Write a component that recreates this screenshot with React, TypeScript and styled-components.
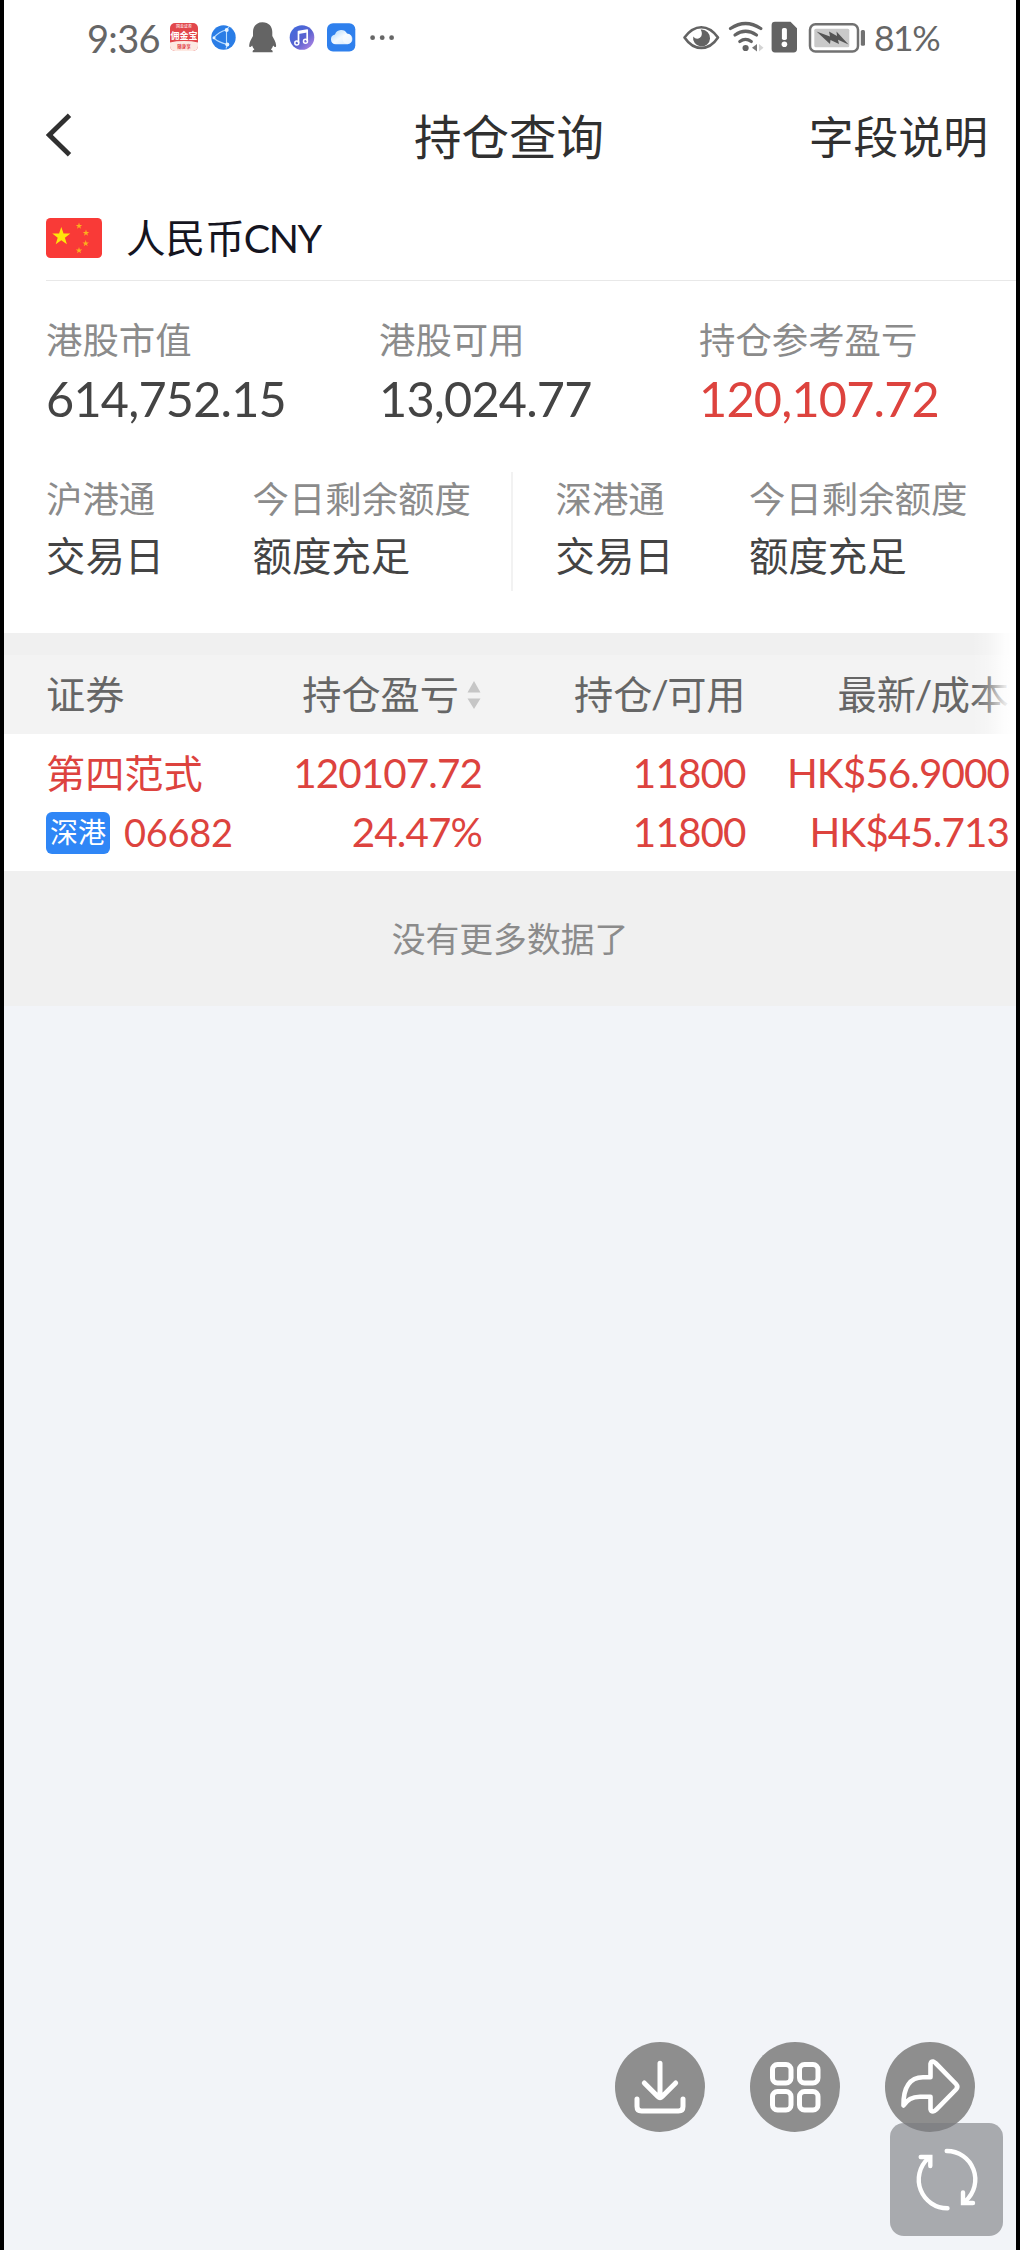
import React from "react";
import styled, { createGlobalStyle } from "styled-components";

const GlobalStyle = createGlobalStyle`
  *, *::before, *::after { box-sizing: border-box; }
  html, body { margin: 0; padding: 0; background: #000; }
  body { font-family: Lato, "Noto Sans CJK SC", sans-serif; }
`;

const RED = "#dd433e";

const Screen = styled.main`
  position: relative;
  width: 1020px;
  height: 2250px;
  overflow: hidden;
  border: solid #000;
  border-width: 0 4px;
  background: #f2f4f8;
  display: flex;
  flex-direction: column;
`;

const StatusBar = styled.header`
  height: 73px;
  flex: none;
  padding: 0 78px 0 83px;
  display: flex;
  align-items: center;
  justify-content: space-between;
  background: #fff;
  color: #666;
`;

const StatusGroup = styled.div<{ $gap: number }>`
  display: flex;
  align-items: center;
  gap: ${(p) => p.$gap}px;
`;

const StatusText = styled.span<{ $size: number; $width: number; $spacing?: number }>`
  width: ${(p) => p.$width}px;
  font-size: ${(p) => p.$size}px;
  line-height: 40px;
  padding-top: 3px;
  letter-spacing: ${(p) => p.$spacing ?? 0}px;
  white-space: nowrap;
`;

const AppBadge = styled.span`
  width: 28px;
  height: 28px;
  margin-right: 13px;
  border-radius: 5px;
  overflow: hidden;
  background: #e2474b;
  color: #fff;
  display: flex;
  flex-direction: column;
  align-items: center;
`;

const BadgeTop = styled.span`
  font-size: 4px;
  line-height: 7px;
`;

const BadgeName = styled.span`
  font-size: 9px;
  font-weight: 700;
  line-height: 11px;
  white-space: nowrap;
`;

const BadgeFoot = styled.span`
  width: 40px;
  flex: 1;
  background: #fde9e2;
  color: #e2474b;
  border-radius: 50% 50% 0 0 / 5px 5px 0 0;
  font-size: 4.5px;
  font-weight: 700;
  line-height: 12px;
  text-align: center;
`;

const NavBar = styled.nav`
  height: 127px;
  flex: none;
  padding: 0 28px 0 42px;
  display: grid;
  grid-template-columns: 368px auto 1fr;
  align-items: center;
  background: #fff;
  color: #303030;
`;

const BackButton = styled.button`
  width: 30px;
  height: 44px;
  margin-top: -3px;
  padding: 0;
  border: 0;
  background: none;
  display: flex;
`;

const NavTitle = styled.h1`
  margin: 0;
  font-size: 47.5px;
  font-weight: 400;
  line-height: 60px;
`;

const NavAction = styled.a`
  justify-self: end;
  font-size: 44.8px;
  line-height: 60px;
`;

const Currency = styled.section`
  height: 81px;
  flex: none;
  padding-left: 42px;
  background: #fff;
`;

const CurrencyInner = styled.div`
  height: 81px;
  display: flex;
  align-items: center;
  gap: 24px;
  border-bottom: 1px solid #e8e8e8;
  padding-bottom: 4px;
`;

const CurrencyName = styled.span`
  font-size: 39.6px;
  line-height: 50px;
  color: #15151f;
`;

const CurrencyCode = styled.span`
  margin-left: -1px;
  letter-spacing: -1.4px;
`;

const Assets = styled.section`
  flex: none;
  height: 189px;
  padding: 34px 0 0 42px;
  display: grid;
  grid-template-columns: 333px 320px 1fr;
  background: #fff;
`;

const Quotas = styled.section`
  flex: none;
  height: 163px;
  padding: 2px 0 0 42px;
  display: flex;
  background: #fff;
`;

const QuotaHalf = styled.div<{ $first?: boolean }>`
  height: 119px;
  padding-top: 2px;
  width: ${(p) => (p.$first ? 467 : 503)}px;
  padding-left: ${(p) => (p.$first ? 0 : 42.5)}px;
  border-right: ${(p) => (p.$first ? "2px solid #f2f2f2" : "0")};
  display: grid;
  grid-template-columns: ${(p) => (p.$first ? 206.5 : 193.5)}px 1fr;
`;

const Label = styled.div`
  font-size: 36.4px;
  line-height: 50px;
  color: #8b8b8b;
  white-space: nowrap;
`;

const Amount = styled.div<{ $up?: boolean }>`
  margin-top: 5px;
  font-size: 48.6px;
  line-height: 56px;
  letter-spacing: -0.8px;
  color: ${(p) => (p.$up ? RED : "#444")};
`;

const State = styled.div`
  margin-top: 7px;
  font-size: 39.4px;
  line-height: 50px;
  color: #444;
  white-space: nowrap;
`;

const Holdings = styled.section`
  position: relative;
  flex: none;
  border-top: 22px solid #f0f0f0;
`;

const columns = `
  display: grid;
  grid-template-columns: 190px 245px 263.5px 263.5px;
  padding-left: 42px;
`;

const HeadRow = styled.div`
  ${columns}
  height: 79px;
  padding-bottom: 2px;
  align-items: center;
  background: #f3f3f3;
  color: #666;
`;

const HeadCell = styled.div<{ $end?: boolean }>`
  display: flex;
  align-items: center;
  justify-content: ${(p) => (p.$end ? "flex-end" : "flex-start")};
  gap: 8px;
  font-size: 39.2px;
  line-height: 50px;
  white-space: nowrap;
`;

const HeadPair = styled.span`
  margin-right: -1px;
`;

const Slash = styled.span`
  margin: 0 -1.5px;
`;

const EdgeFade = styled.div`
  position: absolute;
  top: -22px;
  right: 0;
  width: 44px;
  height: 101px;
  background: linear-gradient(to right, rgba(255, 255, 255, 0), rgba(255, 255, 255, 0.25) 35%, rgba(255, 255, 255, 0.85) 75%, #fff);
`;

const HoldingRow = styled.div`
  ${columns}
  height: 137px;
  padding-top: 9px;
  background: #fff;
  color: ${RED};
`;

const Cell = styled.div<{ $end?: boolean }>`
  display: flex;
  flex-direction: column;
  align-items: ${(p) => (p.$end ? "flex-end" : "flex-start")};
`;

const Figure = styled.span`
  font-size: 40.4px;
  line-height: 59px;
  letter-spacing: -0.9px;
  margin-right: -1px;
  white-space: nowrap;
`;

const StockName = styled.span`
  font-size: 39.2px;
  line-height: 59px;
`;

const StockCode = styled.span`
  display: flex;
  align-items: center;
  gap: 14px;
  height: 60px;
  font-size: 38px;
  letter-spacing: -0.3px;
`;

const MarketTag = styled.span`
  width: 64px;
  height: 42px;
  margin-top: 2px;
  border-radius: 6px;
  background: #2f86f6;
  color: #fff;
  font-size: 28px;
  line-height: 41px;
  letter-spacing: 0;
  text-align: center;
`;

const EndNote = styled.div`
  flex: none;
  height: 135px;
  padding-top: 43px;
  background: #f0f0f0;
  color: #8b8b8b;
  font-size: 33.8px;
  line-height: 50px;
  text-align: center;
`;

const FloatingActions = styled.div`
  position: absolute;
  right: 41px;
  bottom: 118px;
  display: flex;
  gap: 45px;
`;

const RoundButton = styled.button`
  width: 90px;
  height: 90px;
  padding: 0;
  border: 0;
  border-radius: 50%;
  background: #8e8e8e;
  display: flex;
`;

const RefreshButton = styled.button`
  position: absolute;
  right: 13.5px;
  bottom: 14px;
  width: 113px;
  height: 113px;
  padding: 0;
  border: 0;
  border-radius: 14px;
  background: rgba(121, 122, 127, 0.61);
  display: flex;
`;

const LeftStatusIcons = () => (
  <svg width="185" height="34" viewBox="211 19 185 34">
    <defs>
      <linearGradient id="music" x1="0" y1="0" x2="1" y2="1">
        <stop offset="0" stopColor="#3d6be0" />
        <stop offset="0.55" stopColor="#5a62cf" />
        <stop offset="1" stopColor="#c08be8" />
      </linearGradient>
      <linearGradient id="cloud" x1="0" y1="0" x2="1" y2="1">
        <stop offset="0" stopColor="#a9d4fb" />
        <stop offset="0.5" stopColor="#f4faff" />
        <stop offset="1" stopColor="#cfe6fd" />
      </linearGradient>
    </defs>
    <circle cx="223.5" cy="36.5" r="12.2" fill="#2a7de6" />
    <g stroke="#b9dcff" strokeWidth="1.1" fill="none">
      <path d="M226.5 29 Q219 30.5 213.5 37 Q219 41.5 227.5 43.5 M226.5 29 V43.5 M226.5 29 L229 25.5 M227.5 43.5 L226 47.5" />
    </g>
    <g fill="#e6f4ff">
      <circle cx="226.7" cy="29" r="2" />
      <circle cx="214" cy="36.8" r="1.5" />
      <circle cx="227.3" cy="43.5" r="2" />
    </g>
    <path
      d="M262.5 21.2c-6.3 0-9.5 4.4-9.5 9.8v4c-1.6 3-3.6 6-3.8 9.2-.1 2.200 1 2.500 2.900.3.5 1.600 1.300 2.800 2.300 3.900-1.500.6-2 1.400-1.700 2.800h19.900c.3-1.400-.2-2.200-1.700-2.800 1-1.100 1.800-2.300 2.300-3.900 1.900 2.200 3 1.900 2.900-.3-.2-3.200-2.200-6.200-3.800-9.200v-4c0-5.400-3.500-9.800-9.800-9.800z"
      fill="#646464"
    />
    <circle cx="302" cy="36.5" r="12.3" fill="url(#music)" />
    <path d="M298.500 42V30.500L307.200 29V40" fill="none" stroke="#fff" strokeWidth="1.700" strokeLinejoin="round" />
    <path d="M298.500 30.500L307.200 29V31.500L298.500 33z" fill="#fff" />
    <circle cx="296.800" cy="42" r="2" fill="none" stroke="#fff" strokeWidth="1.500" />
    <circle cx="305.500" cy="40.300" r="2" fill="none" stroke="#fff" strokeWidth="1.500" />
    <rect x="327" y="22.3" width="28.3" height="28.3" rx="6" fill="#2f80ed" />
    <path d="M335.800 43.300a5 5 0 0 1-.8-9.900 6.600 6.600 0 0 1 12-.9 5.500 5.500 0 0 1 .8 10.800z" fill="url(#cloud)" />
    <circle cx="347.500" cy="38" r="5" fill="#fff" opacity=".55" />
    <g fill="#666">
      <circle cx="372.6" cy="36.7" r="2.4" />
      <circle cx="382.2" cy="36.7" r="2.4" />
      <circle cx="391.6" cy="36.7" r="2.4" />
    </g>
  </svg>
);

const RightStatusIcons = () => (
  <svg width="184" height="34" viewBox="682 19 184 34">
    <path d="M683.5 36.5Q691 26.2 700.3 26.2T717 36.5Q710 47 700.3 47T683.5 36.5z" fill="none" stroke="#636363" strokeWidth="2.6" strokeLinejoin="round" />
    <path d="M700.5 28.5a8.5 8.5 0 1 1-8.3 7q3 3.7 6.7 1.3 3.6-2.8.8-8.3z" fill="#636363" />
    <g fill="none" stroke="#636363" strokeWidth="3.2" strokeLinecap="round">
      <path d="M729.5 27.5Q744.5 17.5 759.8 27.5" />
      <path d="M734 34Q744.5 26.5 755.5 34" />
      <path d="M738.8 40.5Q744.5 36.3 750.3 40.5" />
    </g>
    <circle cx="744.6" cy="47" r="3.1" fill="#636363" />
    <path d="M756 43v7.5l-5-3.8z" fill="#777" />
    <path d="M758 43v7.5l4.5-3.8z" fill="#d4d4d4" />
    <path d="M774 20.8h15.5l6.5 6.5V48a3.4 3.4 0 0 1-3.4 3.4H774a3.4 3.4 0 0 1-3.4-3.4V24.2a3.4 3.4 0 0 1 3.4-3.4z" fill="#636363" />
    <rect x="780.9" y="27" width="5" height="12" rx="1.8" fill="#fff" />
    <circle cx="783.4" cy="43.3" r="2.8" fill="#fff" />
    <rect x="809" y="23.2" width="48" height="27.3" rx="5.5" fill="#fff" stroke="#717171" strokeWidth="2.5" />
    <rect x="813.3" y="27.7" width="35" height="18.5" rx="1.5" fill="#c9c9c9" />
    <path d="M815.5 30.5L829 35.5 828 30.5 836 35 835.5 30.5 847.5 43.5 837 38.8 838 43 829.5 39 829 43z" fill="#555" />
    <rect x="859.8" y="29" width="4.2" height="15.8" rx="1.5" fill="#717171" />
  </svg>
);

const BackIcon = () => (
  <svg width="30" height="44" viewBox="0 0 30 44" fill="none" stroke="#303030" strokeWidth="4.8">
    <path d="M23.500 2.300L3.300 22 23.500 41.700" />
  </svg>
);

const star = (cx: number, cy: number, r: number) =>
  Array.from({ length: 10 }, (_, i) => {
    const radius = i % 2 ? r * 0.4 : r;
    const angle = (Math.PI / 5) * i - Math.PI / 2;
    return `${(cx + radius * Math.cos(angle)).toFixed(2)},${(cy + radius * Math.sin(angle)).toFixed(2)}`;
  }).join(" ");

const smallStars = [
  [33, 8],
  [40, 15],
  [39.7, 25.5],
  [33, 32.5],
];

const Flag = () => (
  <svg width="56" height="40" viewBox="0 0 56 40">
    <rect width="56" height="40" rx="4.5" fill="#f93a37" />
    <polygon points={star(15.3, 18.5, 9.5)} fill="#ffe60a" />
    {smallStars.map(([x, y]) => (
      <polygon key={y} points={star(x, y, 3.4)} fill="#fbb01e" />
    ))}
  </svg>
);

const SortIcon = () => (
  <svg width="14" height="30" viewBox="0 0 14 30" fill="#c6c6c6">
    <path d="M7 2L13.5 13.5H.5zM7 30L.5 19.5h13z" />
  </svg>
);

const iconStroke = {
  fill: "none",
  stroke: "#fff",
  strokeWidth: 5,
  strokeLinecap: "round",
  strokeLinejoin: "round",
} as const;

const DownloadIcon = () => (
  <svg width="90" height="90" {...iconStroke}>
    <path d="M45 21.2V54.5M29.3 41L42.8 54.5Q45 56.7 47.2 54.5L60.7 41" />
    <path d="M22 57V64.5Q22 69 26.5 69H63.5Q68 69 68 64.5V57" />
  </svg>
);

const GridIcon = () => (
  <svg width="90" height="90" {...iconStroke}>
    {[22.5, 49.5].map((y) =>
      [22.5, 49.5].map((x) => <rect key={`${x}-${y}`} x={x} y={y} width="18.5" height="18.5" rx="5" />),
    )}
  </svg>
);

const ShareIcon = () => (
  <svg width="90" height="90" {...iconStroke} strokeWidth={4.6}>
    <path d="M18.500 63.500C18.200 45 25 35.300 38 35.300H45.500V22Q46 19.200 48.300 19.500 49.500 20 51 21.500L71 42Q73.500 44.800 71 47.500L51 67.800Q49.500 69.500 48 69.500 46 69.500 45.500 67V54.800H35C26.500 54.800 22.500 58 18.500 63.500z" />
  </svg>
);

const RefreshIcon = () => (
  <svg width="113" height="113" fill="none" stroke="#fff" strokeWidth="4.400" strokeLinecap="round">
    <path d="M56.7 28A28.5 28.5 0 0 1 75.5 78" />
    <path d="M73 69.5V80H83" />
    <path d="M57.5 85.3A28.7 28.7 0 0 1 38 35.5" />
    <path d="M30.7 34H40.3V43" />
  </svg>
);

const assets = [
  { label: "港股市值", value: "614,752.15" },
  { label: "港股可用", value: "13,024.77" },
  { label: "持仓参考盈亏", value: "120,107.72", up: true },
];

const channels = ["沪港通", "深港通"];

export default function App() {
  return (
    <>
      <GlobalStyle />
      <Screen>
        <StatusBar>
          <StatusGroup $gap={0}>
            <StatusText $size={38} $width={83} $spacing={-0.7}>9:36</StatusText>
            <AppBadge>
              <BadgeTop>国金证券</BadgeTop>
              <BadgeName>佣金宝</BadgeName>
              <BadgeFoot>随身享</BadgeFoot>
            </AppBadge>
            <LeftStatusIcons />
          </StatusGroup>
          <StatusGroup $gap={7}>
            <RightStatusIcons />
            <StatusText $size={35.5} $width={64} $spacing={-1.5}>81%</StatusText>
          </StatusGroup>
        </StatusBar>
        <NavBar>
          <BackButton aria-label="返回"><BackIcon /></BackButton>
          <NavTitle>持仓查询</NavTitle>
          <NavAction>字段说明</NavAction>
        </NavBar>
        <Currency>
          <CurrencyInner>
            <Flag />
            <CurrencyName>人民币<CurrencyCode>CNY</CurrencyCode></CurrencyName>
          </CurrencyInner>
        </Currency>
        <Assets>
          {assets.map((a) => (
            <div key={a.label}>
              <Label>{a.label}</Label>
              <Amount $up={a.up}>{a.value}</Amount>
            </div>
          ))}
        </Assets>
        <Quotas>
          {channels.map((name, i) => (
            <QuotaHalf key={name} $first={i === 0}>
              <div>
                <Label>{name}</Label>
                <State>交易日</State>
              </div>
              <div>
                <Label>今日剩余额度</Label>
                <State>额度充足</State>
              </div>
            </QuotaHalf>
          ))}
        </Quotas>
        <Holdings>
          <HeadRow>
            <HeadCell>证券</HeadCell>
            <HeadCell $end>持仓盈亏<SortIcon /></HeadCell>
            <HeadCell $end><HeadPair>持仓<Slash>/</Slash>可用</HeadPair></HeadCell>
            <HeadCell $end><HeadPair>最新<Slash>/</Slash>成本</HeadPair></HeadCell>
          </HeadRow>
          <EdgeFade />
          <HoldingRow>
            <Cell>
              <StockName>第四范式</StockName>
              <StockCode><MarketTag>深港</MarketTag>06682</StockCode>
            </Cell>
            <Cell $end>
              <Figure>120107.72</Figure>
              <Figure>24.47%</Figure>
            </Cell>
            <Cell $end>
              <Figure>11800</Figure>
              <Figure>11800</Figure>
            </Cell>
            <Cell $end>
              <Figure>HK$56.9000</Figure>
              <Figure>HK$45.713</Figure>
            </Cell>
          </HoldingRow>
        </Holdings>
        <EndNote>没有更多数据了</EndNote>
        <FloatingActions>
          <RoundButton aria-label="下载"><DownloadIcon /></RoundButton>
          <RoundButton aria-label="更多"><GridIcon /></RoundButton>
          <RoundButton aria-label="分享"><ShareIcon /></RoundButton>
        </FloatingActions>
        <RefreshButton aria-label="刷新"><RefreshIcon /></RefreshButton>
      </Screen>
    </>
  );
}
